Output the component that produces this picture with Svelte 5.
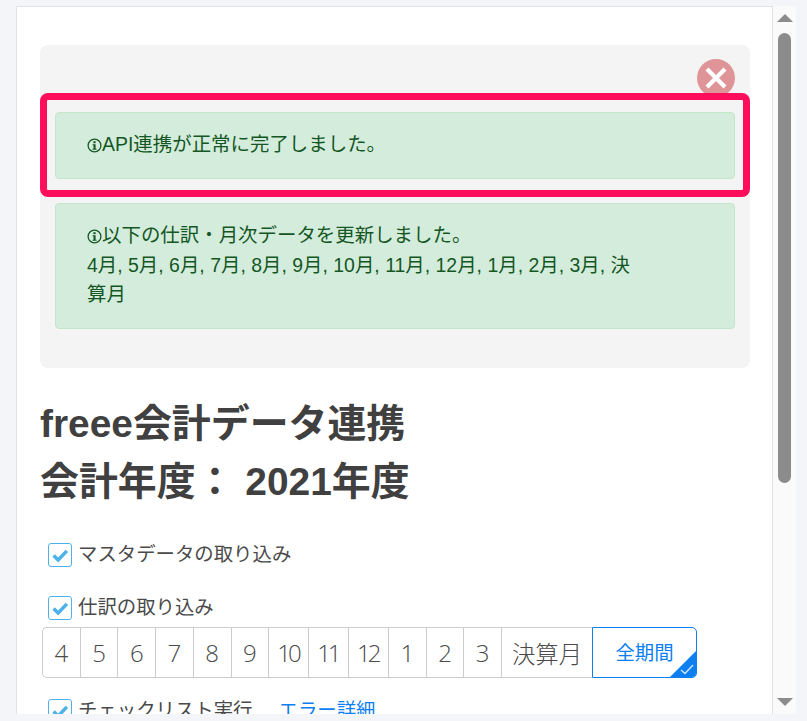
<script>
	const months = ['4', '5', '6', '7', '8', '9', '10', '11', '12', '1', '2', '3'];
	const updated = '4月, 5月, 6月, 7月, 8月, 9月, 10月, 11月, 12月, 1月, 2月, 3月, 決算月';
</script>

{#snippet infoIcon()}
	<svg class="info" viewBox="0 0 15 15" width="15" height="15">
		<circle cx="7.5" cy="7.5" r="6.4" fill="none" stroke="#155724" stroke-width="1.3" />
		<rect x="6.4" y="3.2" width="2.2" height="2" fill="#155724" />
		<path d="M5.6 6.2 H8.6 V10.7 H9.6 V11.8 H5.5 V10.7 H6.5 V7.3 H5.6 Z" fill="#155724" />
	</svg>
{/snippet}

{#snippet tick()}
	<span class="box">
		<svg viewBox="0 0 24 24" width="24" height="24"><path d="M5 12.5 L10 17.5 L19.5 7.5" stroke="#4db2ec" stroke-width="3.8" fill="none" /></svg>
	</span>
{/snippet}

<div class="page">
	<div class="panel">
		<div class="content">
			<div class="notice-box">
				<button class="close" aria-label="閉じる">
					<svg viewBox="0 0 38 38" width="38" height="38">
						<circle cx="19" cy="19" r="19" fill="#df9597" />
						<path d="M10 10 L28 28 M28 10 L10 28" stroke="#fff" stroke-width="4.2" fill="none" />
					</svg>
				</button>
				<div class="alert first">
					{@render infoIcon()}API連携が正常に完了しました。
				</div>
				<div class="alert second">
					<div>{@render infoIcon()}以下の仕訳・月次データを更新しました。</div>
					<div>{updated}</div>
				</div>
				<div class="highlight"></div>
			</div>

			<h1>freee会計データ連携<br />会計年度： 2021年度</h1>

			<label class="check">
				{@render tick()}
				マスタデータの取り込み
			</label>

			<label class="check tight">
				{@render tick()}
				仕訳の取り込み
			</label>

			<div class="months">
				{#each months as m}
					<span class="month" class:two={m.length === 2}>{m}</span>
				{/each}
				<span class="month closing">決算月</span>
				<span class="month all">
					全期間
					<svg class="corner" viewBox="0 0 28 28" width="28" height="28">
						<path d="M28 0 V24 Q28 28 24 28 H0 Z" fill="#0d7ff0" />
						<path d="M12 20 L16 23.5 L24 15" stroke="#cfe6ff" stroke-width="1.4" fill="none" />
					</svg>
				</span>
			</div>

			<div class="check-row">
				<label class="check">
					{@render tick()}
					チェックリスト実行
				</label>
				<a href="#top" class="err">エラー詳細</a>
			</div>
		</div>

		<div class="scrollbar">
			<span class="arrow up"></span>
			<span class="track"><span class="thumb"></span></span>
			<span class="arrow down"></span>
		</div>
	</div>
</div>

<style>
	:global(body) {
		margin: 0;
		background: #f4f5f9;
		font-family: "Liberation Sans", "Noto Sans CJK JP", sans-serif;
	}

	.page {
		height: 721px;
		padding: 6px 11px 7px 16px;
		box-sizing: border-box;
		overflow: hidden;
	}

	.panel {
		display: flex;
		height: 708px;
	}

	.content {
		width: 757px;
		box-sizing: border-box;
		background: #fff;
		border: 1px solid #e2e2e6;
		border-bottom: none;
		padding: 38px 22px 0 23px;
		overflow: hidden;
	}

	.notice-box {
		position: relative;
		background: #f4f4f4;
		border-radius: 8px;
		height: 323px;
		box-sizing: border-box;
		padding: 67px 15px 0;
	}

	.close {
		position: absolute;
		top: 14px;
		right: 15px;
		width: 38px;
		height: 38px;
		padding: 0;
		border: none;
		background: none;
		line-height: 0;
	}

	.alert {
		background: #d4ecdc;
		border: 1px solid #c3e6cb;
		border-radius: 4px;
		color: #155724;
		font-size: 19.45px;
		line-height: 29.5px;
		box-sizing: border-box;
		padding: 17px 31px;
	}

	.first {
		height: 67px;
		margin-bottom: 24px;
	}

	.second {
		height: 126px;
		padding-right: 90px;
	}

	.info {
		vertical-align: -1.5px;
	}

	.highlight {
		position: absolute;
		left: 0;
		right: 0;
		top: 48px;
		height: 104px;
		box-sizing: border-box;
		border: 7px solid #ff0f5b;
		border-radius: 8px;
	}

	h1 {
		margin: 27px 0 0;
		font-size: 38.9px;
		line-height: 58px;
		font-weight: 700;
		color: #404040;
	}

	.check {
		display: flex;
		align-items: flex-start;
		gap: 6px;
		font-family: "Noto Sans CJK JP", sans-serif;
		font-size: 19.4px;
		line-height: 20px;
		color: #4a4a4a;
		margin: 32px 0 0 8px;
	}

	.check.tight {
		margin-top: 29px;
	}

	.box {
		width: 22px;
		height: 22px;
		border: 1px solid #4db2ec;
		border-radius: 3px;
		display: flex;
		align-items: center;
		justify-content: center;
		background: #fff;
	}

	.months {
		display: flex;
		width: fit-content;
		margin: 7px 0 0 2px;
	}

	.month {
		position: relative;
		height: 51px;
		box-sizing: border-box;
		display: flex;
		align-items: center;
		padding: 0 11.5px;
		border: 1px solid #ccc;
		border-right-width: 0;
		font-family: "Open Sans", "Noto Sans CJK JP", sans-serif;
		font-weight: 300;
		font-size: 24px;
		color: #4a4a4a;
		white-space: nowrap;
	}

	.month:first-child {
		border-radius: 5px 0 0 5px;
	}

	.two {
		padding: 0 9.5px 0 8px;
		letter-spacing: -3px;
	}

	.closing {
		width: 91px;
		justify-content: center;
		padding: 0;
		font-size: 23.4px;
	}

	.all {
		width: 105px;
		justify-content: center;
		padding: 0 0 2px;
		border: 1px solid #0d7ff0;
		border-radius: 0 5px 5px 0;
		font-family: "Noto Sans CJK JP", sans-serif;
		font-weight: 400;
		font-size: 19.4px;
		color: #0d7ff0;
		overflow: hidden;
	}

	.corner {
		position: absolute;
		right: -1px;
		bottom: -1px;
	}

	.check-row {
		display: flex;
		align-items: flex-start;
		gap: 26px;
		margin-top: 21px;
	}

	.check-row .check {
		margin-top: 0;
	}

	.err {
		font-family: "Noto Sans CJK JP", sans-serif;
		font-size: 19.4px;
		line-height: 20px;
		color: #0d7ff0;
		text-decoration: none;
	}

	.scrollbar {
		width: 23px;
		background: #fafafa;
		display: flex;
		flex-direction: column;
		align-items: center;
	}

	.arrow {
		width: 0;
		height: 0;
		border-left: 8px solid transparent;
		border-right: 8px solid transparent;
	}

	.up {
		margin-top: 8px;
		border-bottom: 8px solid #8c8c8c;
	}

	.down {
		margin-bottom: 8px;
		border-top: 8px solid #8c8c8c;
	}

	.track {
		flex: 1;
		width: 13px;
	}

	.thumb {
		display: block;
		width: 13px;
		height: 450px;
		margin-top: 11px;
		background: #8c8c8c;
		border-radius: 7px;
	}
</style>
